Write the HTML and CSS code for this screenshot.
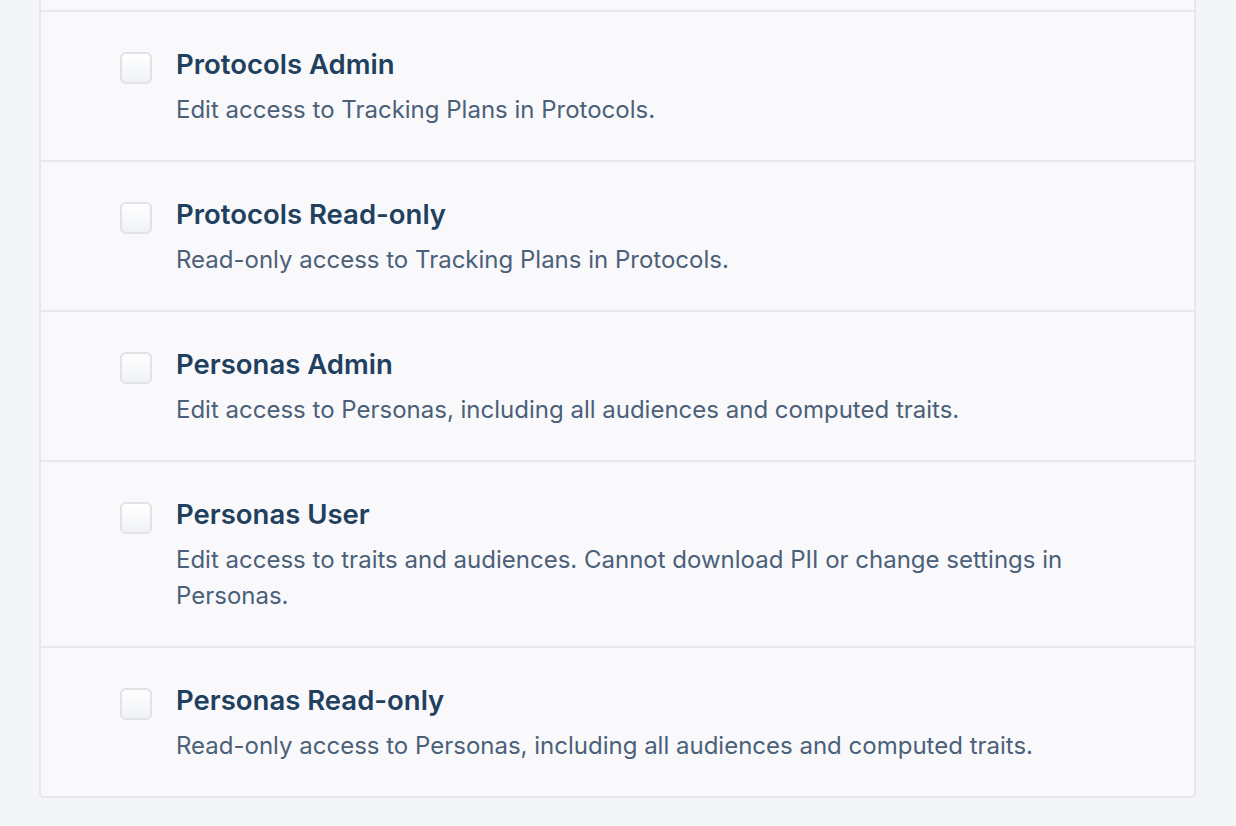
FILE: index.html
```html
<!DOCTYPE html>
<html>
<head>
<meta charset="utf-8">
<link rel="stylesheet" href="styles.css">
</head>
<body>
<div class="panel">
  <div class="row row-cut"></div>
  <div class="row">
    <span class="checkbox"></span>
    <div class="text">
      <div class="title">Protocols Admin</div>
      <div class="desc">Edit access to Tracking Plans in Protocols.</div>
    </div>
  </div>
  <div class="row">
    <span class="checkbox"></span>
    <div class="text">
      <div class="title">Protocols Read-only</div>
      <div class="desc">Read-only access to Tracking Plans in Protocols.</div>
    </div>
  </div>
  <div class="row">
    <span class="checkbox"></span>
    <div class="text">
      <div class="title">Personas Admin</div>
      <div class="desc">Edit access to Personas, including all audiences and computed traits.</div>
    </div>
  </div>
  <div class="row">
    <span class="checkbox"></span>
    <div class="text">
      <div class="title">Personas User</div>
      <div class="desc">Edit access to traits and audiences. Cannot download PII or change settings in Personas.</div>
    </div>
  </div>
  <div class="row">
    <span class="checkbox"></span>
    <div class="text">
      <div class="title">Personas Read-only</div>
      <div class="desc">Read-only access to Personas, including all audiences and computed traits.</div>
    </div>
  </div>
</div>
</body>
</html>
```
FILE: styles.css
```css
html, body {
  margin: 0;
  padding: 0;
  background: #f4f5f7;
  font-family: Inter, "Noto Sans", sans-serif;
}

.panel {
  margin: 0 40px 0 39px;
  width: 1153px;
  background: #f9f9fb;
  border-left: 2px solid #e6e8ec;
  border-right: 2px solid #e6e8ec;
  border-bottom: 2px solid #e6e8ec;
  border-radius: 0 0 5px 5px;
}

.row {
  display: flex;
  align-items: flex-start;
  gap: 24px;
  padding: 35px 120px 32px 79px;
  border-bottom: 2px solid #e6e8ec;
}

.row:last-child {
  border-bottom: none;
}

.row-cut {
  height: 10px;
  padding: 0;
}

.checkbox {
  flex: none;
  width: 28px;
  height: 28px;
  margin-top: 5px;
  border: 2px solid #e0e2e7;
  border-radius: 6px;
  background: linear-gradient(#ffffff, #f1f2f5);
  box-sizing: content-box;
}

.text {
  display: flex;
  flex-direction: column;
  gap: 11px;
}

.title {
  font-size: 27.5px;
  line-height: 34px;
  font-weight: 600;
  color: #213f5e;
}

.desc {
  font-size: 24px;
  line-height: 36px;
  color: #4b6079;
}
```
